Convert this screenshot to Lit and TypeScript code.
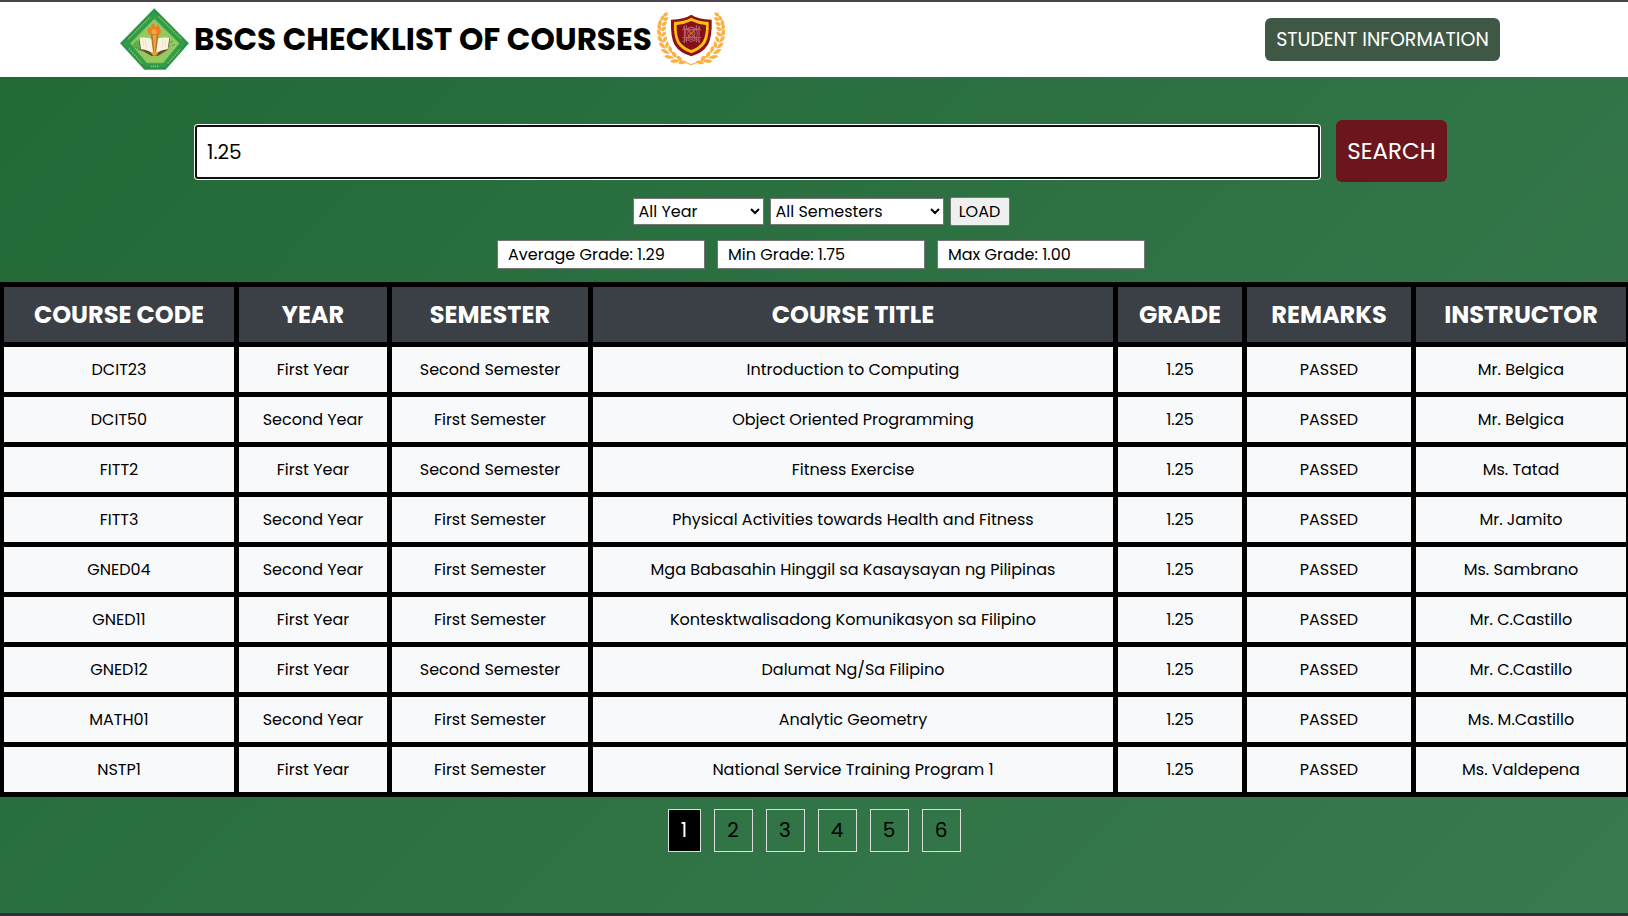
import { LitElement, html, css, svg } from "lit";
import { customElement, state } from "lit/decorators.js";

type Course = [string, string, string, string, string, string, string];

const COLUMNS: [string, string][] = [
  ["COURSE CODE", "code"],
  ["YEAR", "year"],
  ["SEMESTER", "semester"],
  ["COURSE TITLE", "title"],
  ["GRADE", "grade"],
  ["REMARKS", "remarks"],
  ["INSTRUCTOR", "instructor"],
];

const COURSES: Course[] = [
  ["DCIT23", "First Year", "Second Semester", "Introduction to Computing", "1.25", "PASSED", "Mr. Belgica"],
  ["DCIT50", "Second Year", "First Semester", "Object Oriented Programming", "1.25", "PASSED", "Mr. Belgica"],
  ["FITT2", "First Year", "Second Semester", "Fitness Exercise", "1.25", "PASSED", "Ms. Tatad"],
  ["FITT3", "Second Year", "First Semester", "Physical Activities towards Health and Fitness", "1.25", "PASSED", "Mr. Jamito"],
  ["GNED04", "Second Year", "First Semester", "Mga Babasahin Hinggil sa Kasaysayan ng Pilipinas", "1.25", "PASSED", "Ms. Sambrano"],
  ["GNED11", "First Year", "First Semester", "Kontesktwalisadong Komunikasyon sa Filipino", "1.25", "PASSED", "Mr. C.Castillo"],
  ["GNED12", "First Year", "Second Semester", "Dalumat Ng/Sa Filipino", "1.25", "PASSED", "Mr. C.Castillo"],
  ["MATH01", "Second Year", "First Semester", "Analytic Geometry", "1.25", "PASSED", "Ms. M.Castillo"],
  ["NSTP1", "First Year", "First Semester", "National Service Training Program 1", "1.25", "PASSED", "Ms. Valdepena"],
];

/* Leaves of the laurel: centre x, centre y, angle, length. */
const LEAVES: [number, number, number, number][] = [
  [79, 48, -38, 9],
  [69, 59, -65, 9],
  [80, 62, -28, 9],
  [62, 73, -85, 10],
  [75, 76, -35, 10],
  [60, 88, 75, 11],
  [73, 91, -42, 10],
  [60, 105, 62, 12],
  [73, 107, -50, 10],
  [63, 123, 52, 13],
  [77, 123, -62, 11],
  [69, 142, 42, 14],
  [83, 139, -78, 11],
  [78, 160, 28, 15],
  [93, 154, 72, 12],
  [90, 176, 12, 16],
  [105, 169, 55, 12],
  [107, 188, -4, 15],
  [120, 180, 42, 11],
  [129, 192, -10, 13],
];

const leafPath = (l: number) =>
  `M${-l} 0Q${-l / 4} -11 ${l} 0Q${-l / 4} 11 ${-l} 0Z`;

const laurelSide = () =>
  svg`<g fill="#fbb040">
    ${LEAVES.map(
      ([x, y, a, l]) => svg`<path d=${leafPath(l)} transform="translate(${x} ${y}) rotate(${a})"></path>`
    )}
    <path d="M120 185Q136 189 158 198L155 201Q138 193 120 188Z"></path>
  </g>`;

const universitySeal = svg`
  <path d="M133 25L237 130L167 209H103L30 130Z" fill="#2f9b4f"></path>
  <path d="M133 31L230 130L165 204H105L37 130Z" fill="none" stroke="#278642" stroke-width="3"></path>
  <path d="M133 56L208 130L160 189H110L61 130Z" fill="#93c95f"></path>
  <path d="M133 56L208 130L160 189H110L61 130Z" fill="none" stroke="#5db04f" stroke-width="2"></path>
  <g fill="none" stroke="#8fbf42" stroke-width="5">
    <path d="M55 117L120 51" stroke-dasharray="4 3"></path>
    <path d="M146 50L214 117" stroke-dasharray="4 3"></path>
    <path d="M57 146L96 190" stroke-dasharray="4 4"></path>
    <path d="M173 190L211 147" stroke-dasharray="4 4"></path>
    <path d="M123 199H145" stroke-dasharray="4 2"></path>
  </g>
  <path d="M68 136l12-14 8 5 8-8v34l-12-3-6-6zM74 128l8 18M84 128l5 22M66 141l26 4" fill="#67b64d" stroke="#45a047" stroke-width="2"></path>
  <path d="M172 122l5-5M180 130l8-8M187 138l6-6M176 136l5 3" stroke="#3f8f3e" stroke-width="3"></path>
  <path d="M86 116L91 149L125 168H143L174 149L180 116L160 112L135 123L108 112Z" fill="#6b4a2c"></path>
  <path d="M88 114Q112 107 131 120V164Q116 149 93 148Z" fill="#f8f3df"></path>
  <path d="M178 114Q154 107 136 120V164Q151 149 173 148Z" fill="#f8f3df"></path>
  <path d="M98 120L102 140M106 118L110 142M168 120L164 140M160 118L156 142" stroke="#e6dabb" stroke-width="2"></path>
  <path d="M122 101H146L138 162H130Z" fill="#b9742b"></path>
  <path d="M128 104H140L135 158H133Z" fill="#e8a440"></path>
  <path d="M118 103Q108 91 118 80Q120 88 124 86Q120 74 133 70Q132 79 138 81Q143 76 141 72Q153 82 149 91Q151 90 152 87Q155 99 147 104Z" fill="#ef7d26"></path>
  <path d="M127 102Q121 93 130 86Q133 92 137 86Q143 94 139 102Z" fill="#f8a534"></path>
  <path d="M124 159Q134 149 144 159L139 167H129Z" fill="#d9a62c"></path>`;

const departmentCrest = svg`
  ${laurelSide()}
  <g transform="translate(311 0) scale(-1 1)">${laurelSide()}</g>
  <path d="M156 49Q174 62 217 64Q219 116 205 140Q190 164 156 174Q121 164 106 140Q93 116 95 64Q137 62 156 49Z" fill="#8c1118"></path>
  <path d="M156 58Q177 69 208 71Q210 114 198 135Q184 155 156 165Q127 155 114 135Q102 114 104 71Q135 69 156 58Z" fill="#fdc010"></path>
  <path d="M156 68Q176 78 200 80Q201 111 190 130Q179 146 156 155Q133 146 121 130Q111 111 112 80Q136 78 156 68Z" fill="#86101a"></path>
  <g fill="none" stroke="#b7676b" stroke-width="3">
    <path d="M131 86Q137 98 156 86Q175 98 183 86M131 130Q138 118 156 130Q174 118 183 130M135 82V134M179 82V134"></path>
    <circle cx="156" cy="105" r="18"></circle>
    <circle cx="156" cy="105" r="11"></circle>
    <path d="M141 80V94H171V80M141 132V118H171V132M129 94H144L168 118H185M129 118H144L168 94H185"></path>
  </g>
  <rect x="149" y="99" width="14" height="12" rx="3" fill="#b53b20"></rect>
  <path d="M152 102L160 108M160 102L152 108" stroke="#e7932b" stroke-width="2"></path>`;

@customElement("app-root")
export class AppRoot extends LitElement {
  static styles = css`
    :host {
      display: block;
      font-family: Poppins, Inter, sans-serif;
      color: #000;
    }
    * {
      box-sizing: border-box;
    }
    .page {
      min-height: 100vh;
      display: flex;
      flex-direction: column;
      border-top: 2px solid #4d454d;
      border-bottom: 3px solid #35293a;
      background: linear-gradient(135deg, #226936, #397a4f);
    }
    .header {
      display: flex;
      align-items: center;
      justify-content: space-between;
      height: 75px;
      padding: 0 128px 0 120px;
      background: #fff;
    }
    .brand {
      display: flex;
      align-items: center;
      gap: 5px;
      padding-bottom: 2px;
    }
    .seal {
      width: 69px;
      height: 62px;
    }
    .crest {
      width: 68px;
      height: 53px;
    }
    .heading {
      margin: 0;
      font-size: 31px;
      line-height: 48px;
      font-weight: 700;
      white-space: nowrap;
    }
    .info-link {
      display: flex;
      align-items: center;
      justify-content: center;
      min-width: 235px;
      height: 43px;
      border-radius: 6px;
      background: #3f5845;
      color: #fff;
      font-size: 19px;
      text-decoration: none;
      white-space: nowrap;
    }
    .tools {
      display: flex;
      flex-direction: column;
      padding: 43px 0 13px 14px;
    }
    .search {
      display: flex;
      align-items: center;
      gap: 16px;
      padding: 0 181px;
    }
    .search-box {
      flex: 1;
      min-width: 0;
      height: 54px;
      margin: 2px 0 0;
      padding: 0 10px;
      border: 2px solid #101010;
      border-radius: 3px;
      outline: none;
      box-shadow: 0 0 0 1px #fff;
      background: #fff;
      font: 400 20px/30px Poppins, Inter, sans-serif;
      color: #000;
    }
    .search-button {
      width: 111px;
      height: 62px;
      padding: 0;
      border: 0;
      border-radius: 6px;
      background: #6a161c;
      color: #fff;
      font: 400 23px/36px Poppins, Inter, sans-serif;
    }
    .filters {
      display: flex;
      align-items: center;
      justify-content: center;
      gap: 6px;
      margin-top: 15px;
    }
    .select {
      height: 27px;
      padding: 0 1px;
      border: 1px solid #767676;
      border-radius: 0;
      background: #fff;
      color: #000;
      font: 400 16px/24px Poppins, Inter, sans-serif;
    }
    .select-year {
      width: 131px;
    }
    .select-semester {
      width: 174px;
    }
    .load {
      width: 60px;
      height: 29px;
      padding: 0;
      border: 1px solid #767676;
      border-radius: 2px;
      background: #efefef;
      color: #000;
      font: 400 16px/24px Poppins, Inter, sans-serif;
    }
    .stats {
      display: flex;
      justify-content: center;
      gap: 12px;
      margin-top: 14px;
    }
    .stat {
      width: 208px;
      height: 29px;
      padding: 0 10px;
      border: 1px solid #767676;
      background: #fff;
      color: #000;
      font: 400 16px/24px Poppins, Inter, sans-serif;
    }
    .courses {
      width: 100%;
      table-layout: fixed;
      border-collapse: separate;
      border-spacing: 0;
      border-top: 5px solid #000;
      border-left: 4px solid #000;
    }
    .th,
    .td {
      padding: 0;
      border-right: 5px solid #000;
      border-bottom: 5px solid #000;
      text-align: center;
      white-space: nowrap;
    }
    .th:last-child,
    .td:last-child {
      border-right-width: 2px;
    }
    .th {
      height: 60px;
      background: #3b3f46;
      color: #fff;
      font-size: 24px;
      line-height: 36px;
      font-weight: 700;
    }
    .td {
      height: 50px;
      background: #f8f9fb;
      font-size: 16px;
      line-height: 24px;
    }
    .code {
      width: 235px;
    }
    .year {
      width: 153px;
    }
    .semester {
      width: 201px;
    }
    .grade {
      width: 129px;
    }
    .remarks {
      width: 169px;
    }
    .instructor {
      width: 212px;
    }
    .pages {
      display: flex;
      justify-content: center;
      gap: 13px;
      padding: 12px 0 0;
    }
    .page-button {
      min-width: 39px;
      height: 43px;
      padding: 0 12px 2px;
      border: 1px solid #ddd;
      background: transparent;
      color: #000;
      font: 400 20px/30px Poppins, Inter, sans-serif;
    }
    .page-button.active {
      min-width: 33px;
      background: #000;
      color: #fff;
    }
  `;

  @state() private current = 1;

  render() {
    return html`
      <div class="page">
        <header class="header">
          <div class="brand">
            <svg class="seal" viewBox="30 24 207 186" aria-hidden="true">${universitySeal}</svg>
            <h1 class="heading">BSCS CHECKLIST OF COURSES</h1>
            <svg class="crest" viewBox="53 41 204 159" aria-hidden="true">${departmentCrest}</svg>
          </div>
          <a class="info-link" href="#student">STUDENT INFORMATION</a>
        </header>
        <section class="tools">
          <form class="search" @submit=${(e: Event) => e.preventDefault()}>
            <input class="search-box" type="text" aria-label="Search courses" .value=${"1.25"} />
            <button class="search-button" type="submit">SEARCH</button>
          </form>
          <div class="filters">
            <select class="select select-year" aria-label="Year">
              <option>All Year</option>
              <option>First Year</option>
              <option>Second Year</option>
            </select>
            <select class="select select-semester" aria-label="Semester">
              <option>All Semesters</option>
              <option>First Semester</option>
              <option>Second Semester</option>
            </select>
            <button class="load" type="button">LOAD</button>
          </div>
          <div class="stats">
            ${["Average Grade: 1.29", "Min Grade: 1.75", "Max Grade: 1.00"].map(
              (s) => html`<input class="stat" type="text" readonly aria-label=${s.split(":")[0]} .value=${s} />`
            )}
          </div>
        </section>
        <table class="courses">
          <thead>
            <tr>
              ${COLUMNS.map(([label, name]) => html`<th class="th ${name}" scope="col">${label}</th>`)}
            </tr>
          </thead>
          <tbody>
            ${COURSES.map((row) => html`<tr>${row.map((cell) => html`<td class="td">${cell}</td>`)}</tr>`)}
          </tbody>
        </table>
        <nav class="pages" aria-label="Pages">
          ${[1, 2, 3, 4, 5, 6].map(
            (n) => html`<button
              class="page-button ${n === this.current ? "active" : ""}"
              type="button"
              @click=${() => (this.current = n)}
            >${n}</button>`
          )}
        </nav>
      </div>
    `;
  }
}
